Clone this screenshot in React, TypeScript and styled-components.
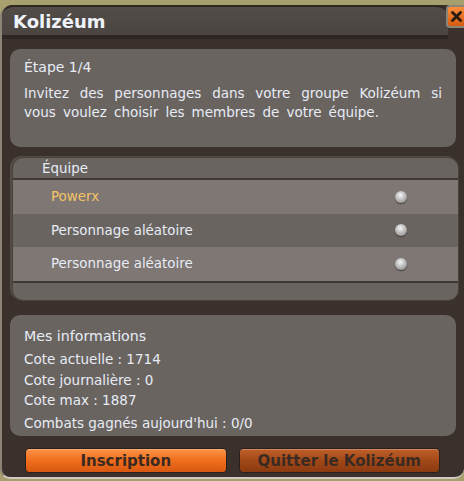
import React from "react";
import styled, { createGlobalStyle } from "styled-components";

const GlobalStyle = createGlobalStyle`
  html, body {
    margin: 0;
    padding: 0;
    background: #a89f6e;
    font-family: "DejaVu Sans", Verdana, sans-serif;
  }
`;

interface Member {
  name: string;
  self?: boolean;
}

const members: Member[] = [
  { name: "Powerx", self: true },
  { name: "Personnage aléatoire" },
  { name: "Personnage aléatoire" },
];

const stats = [
  "Cote actuelle : 1714",
  "Cote journalière : 0",
  "Cote max : 1887",
];

const Window = styled.div`
  position: relative;
  margin-top: 5px;
  height: 474px;
  box-sizing: border-box;
  background: #3a312d;
  border-radius: 12px 12px 10px 10px;
  border-left: 2px solid #8c8477;
  border-bottom: 2px solid #cfcac4;
  display: flex;
  flex-direction: column;
`;

const TitleBar = styled.div`
  height: 28px;
  margin-right: 16px;
  padding-left: 11px;
  display: flex;
  align-items: center;
  background: linear-gradient(#524c48, #4a4541);
  border-top: 2px solid #2e2825;
  border-radius: 11px 11px 0 0;
  border-bottom: 4px solid #2d2623;
  color: #eef2fb;
  font-size: 18px;
  font-weight: bold;
`;

const CloseButton = styled.div`
  position: absolute;
  top: 0;
  right: 0;
  width: 18px;
  height: 23px;
  box-sizing: border-box;
  border: 2px solid #8c8477;
  border-right: none;
  border-radius: 4px 0 0 4px;
  background: linear-gradient(#f98e3e, #d65a10);
  display: flex;
  align-items: center;
  justify-content: center;
`;

const Content = styled.div`
  flex: 1;
  padding: 10px 8px 0 8px;
  display: flex;
  flex-direction: column;
`;

const Panel = styled.div<{ $height: number }>`
  height: ${(p) => p.$height}px;
  box-sizing: border-box;
  background: #6a6461;
  border-radius: 10px;
  color: #e7ecf5;
`;

const StepPanel = styled(Panel)`
  padding: 8px 14px 0 14px;
`;

const StepTitle = styled.div`
  font-size: 14px;
  line-height: 20px;
`;

const Paragraph = styled.div`
  margin-top: 7px;
  font-size: 13.5px;
  line-height: 19px;
`;

// the game wraps the text at fixed points: first line is stretched, last one is not
const TextLine = styled.div<{ $stretch?: boolean }>`
  white-space: nowrap;
  text-align: ${(p) => (p.$stretch ? "justify" : "left")};
  text-align-last: ${(p) => (p.$stretch ? "justify" : "left")};
  word-spacing: ${(p) => (p.$stretch ? 0 : 2.8)}px;
`;

const TeamPanel = styled(Panel)`
  margin: 11px -2px 0 3px;
  overflow: hidden;
  box-shadow: 0 0 0 1px #4a413d, -2px -1px 0 1px #554b46;
  display: flex;
  flex-direction: column;
`;

const TeamHeader = styled.div`
  height: 20px;
  padding-left: 29px;
  font-size: 13.4px;
  line-height: 21px;
  border-bottom: 2px solid #3f3734;
`;

const Row = styled.div<{ $alt: boolean }>`
  height: 33.5px;
  display: flex;
  align-items: center;
  justify-content: space-between;
  padding: 0 51px 0 38px;
  background: ${(p) => (p.$alt ? "#6a6461" : "#7f7774")};
`;

const Name = styled.span<{ $self?: boolean }>`
  font-size: 13.4px;
  color: ${(p) => (p.$self ? "#f3c466" : "#e7ecf5")};
`;

const Knob = styled.span`
  width: 12px;
  height: 12px;
  border-radius: 50%;
  background: radial-gradient(circle at 45% 35%, #f4f4f4 0%, #bdbdbd 45%, #7c7c7c 100%);
  box-shadow: 0 1px 1px rgba(40, 34, 32, 0.7);
`;

const TeamFooter = styled.div`
  flex: 1;
  border-top: 2px solid #3f3734;
`;

const InfoPanel = styled(Panel)`
  margin-top: 15px;
  padding: 11px 14px 0 14px;
`;

const InfoTitle = styled.div`
  font-size: 14.2px;
  line-height: 20px;
  margin-bottom: 3px;
`;

const InfoLine = styled.div<{ $gap?: number }>`
  font-size: 13.5px;
  line-height: 20.5px;
  margin-top: ${(p) => p.$gap ?? 0}px;
`;

const Actions = styled.div`
  display: flex;
  gap: 12px;
  padding: 12px 16px 0 15px;
`;

const ActionButton = styled.button<{ $dark?: boolean }>`
  flex: 1;
  height: 25px;
  padding: 0;
  border: 1px solid #2a201b;
  border-radius: 4px;
  font-family: "DejaVu Sans", Verdana, sans-serif;
  font-size: 15px;
  font-weight: bold;
  color: #3b2a22;
  background: ${(p) =>
    p.$dark
      ? "linear-gradient(#c0602a 0%, #a24818 50%, #8a3a10 100%)"
      : "linear-gradient(#fb9448 0%, #f06e1c 50%, #d85810 100%)"};
  box-shadow: inset 0 1px 0 rgba(255, 255, 255, 0.25);
`;

export default function App() {
  return (
    <>
      <GlobalStyle />
      <Window>
        <TitleBar>Kolizéum</TitleBar>
        <CloseButton>
          <svg width="11" height="11" viewBox="0 0 11 11">
            <path d="M1.5 1.5 L9.5 9.5 M9.5 1.5 L1.5 9.5" stroke="#2a1a10" strokeWidth="2.8" strokeLinecap="round" />
          </svg>
        </CloseButton>
        <Content>
          <StepPanel $height={98}>
            <StepTitle>Étape 1/4</StepTitle>
            <Paragraph>
              <TextLine $stretch>Invitez des personnages dans votre groupe Kolizéum si</TextLine>
              <TextLine>vous voulez choisir les membres de votre équipe.</TextLine>
            </Paragraph>
          </StepPanel>
          <TeamPanel $height={142}>
            <TeamHeader>Équipe</TeamHeader>
            {members.map((m, i) => (
              <Row key={i} $alt={i % 2 === 1}>
                <Name $self={m.self}>{m.name}</Name>
                <Knob />
              </Row>
            ))}
            <TeamFooter />
          </TeamPanel>
          <InfoPanel $height={121}>
            <InfoTitle>Mes informations</InfoTitle>
            {stats.map((s) => (
              <InfoLine key={s}>{s}</InfoLine>
            ))}
            <InfoLine $gap={2}>Combats gagnés aujourd'hui : 0/0</InfoLine>
          </InfoPanel>
          <Actions>
            <ActionButton>Inscription</ActionButton>
            <ActionButton $dark>Quitter le Kolizéum</ActionButton>
          </Actions>
        </Content>
      </Window>
    </>
  );
}
